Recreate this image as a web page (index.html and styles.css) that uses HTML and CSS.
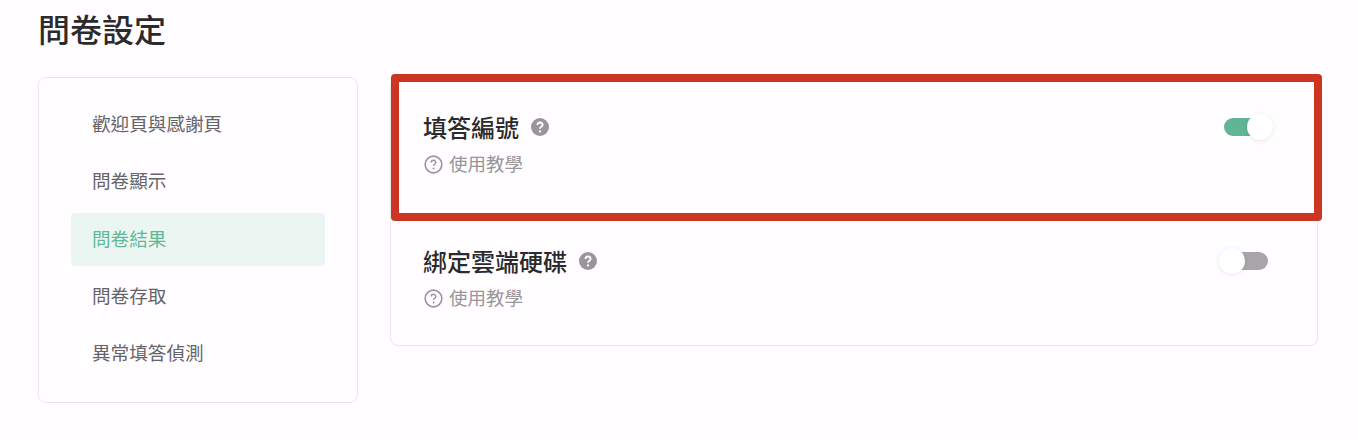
FILE: index.html
```html
<!DOCTYPE html>
<html lang="zh-Hant">
<head>
<meta charset="utf-8">
<title>問卷設定</title>
<link rel="stylesheet" href="styles.css">
</head>
<body>
<svg class="defs" width="0" height="0" aria-hidden="true">
  <symbol id="help-solid" viewBox="0 0 18 18">
    <circle cx="9" cy="9" r="9" fill="#98969a"/>
    <path d="M6.4 7.1a2.6 2.6 0 0 1 5.2 0c0 1.7-2.6 1.8-2.6 3.6" fill="none" stroke="#fff" stroke-width="1.8" stroke-linecap="butt"/>
    <circle cx="9" cy="13.4" r="1.1" fill="#fff"/>
  </symbol>
  <symbol id="help-line" viewBox="0 0 18 18">
    <circle cx="9" cy="9" r="7.9" fill="none" stroke="#98969a" stroke-width="1.5"/>
    <path d="M6.8 7.2a2.2 2.2 0 0 1 4.4 0c0 1.5-2.2 1.6-2.2 3.2" fill="none" stroke="#98969a" stroke-width="1.4"/>
    <circle cx="9" cy="12.8" r=".9" fill="#98969a"/>
  </symbol>
</svg>
<main class="page">
  <h1 class="title">問卷設定</h1>
  <div class="layout">
    <nav class="sidebar">
      <a class="nav-item">歡迎頁與感謝頁</a>
      <a class="nav-item">問卷顯示</a>
      <a class="nav-item active">問卷結果</a>
      <a class="nav-item">問卷存取</a>
      <a class="nav-item">異常填答偵測</a>
    </nav>
    <section class="panel">
      <div class="row">
        <div class="row-text">
          <div class="row-title"><span>填答編號</span><svg class="icon-solid"><use href="#help-solid"/></svg></div>
          <div class="row-link"><svg class="icon-line"><use href="#help-line"/></svg><span>使用教學</span></div>
        </div>
        <div class="toggle on"><span class="knob"></span></div>
      </div>
      <div class="row">
        <div class="row-text">
          <div class="row-title"><span>綁定雲端硬碟</span><svg class="icon-solid"><use href="#help-solid"/></svg></div>
          <div class="row-link"><svg class="icon-line"><use href="#help-line"/></svg><span>使用教學</span></div>
        </div>
        <div class="toggle"><span class="knob"></span></div>
      </div>
      <div class="highlight"></div>
    </section>
  </div>
</main>
</body>
</html>
```
FILE: styles.css
```css
* { box-sizing: border-box; }
html, body { margin: 0; height: 100%; }
body {
  background: #fffdff;
  color: #2b2a2c;
  font-family: "Noto Sans CJK TC", "Noto Sans", sans-serif;
  overflow: hidden;
}
.defs { position: absolute; }
.page { padding: 0 40px 0 38px; }
.title {
  margin: 0;
  height: 77px;
  padding-top: 5px;
  font-size: 32px;
  line-height: 46px;
  font-weight: 500;
  color: #2b2a2c;
}
.layout { display: flex; align-items: flex-start; gap: 32px; }
.sidebar {
  width: 320px;
  height: 326px;
  padding: 20px 32px;
  display: flex;
  flex-direction: column;
  gap: 4.25px;
  border: 1px solid #e8e6ea;
  border-radius: 8px;
}
.nav-item {
  height: 53px;
  padding-left: 21px;
  border-radius: 4px;
  font-size: 18.6px;
  line-height: 49px;
  color: #666468;
  font-weight: 400;
}
.nav-item.active { background: #ebf6f2; color: #5fb898; }
.panel {
  position: relative;
  width: 928px;
  height: 269px;
  border: 1px solid #e8e6ea;
  border-radius: 8px;
}
.row {
  height: 134px;
  padding: 0 49px 0 32px;
  display: flex;
  justify-content: space-between;
}
.row-title {
  display: flex;
  align-items: center;
  gap: 12px;
  height: 34px;
  margin-top: 32px;
  font-size: 24px;
  line-height: 34px;
  font-weight: 500;
}
.row-link {
  display: flex;
  align-items: center;
  gap: 6px;
  height: 26px;
  margin-top: 6px;
  font-size: 18.5px;
  line-height: 26px;
  color: #98969a;
}
.icon-solid { width: 18px; height: 18px; }
.icon-line { width: 19px; height: 19px; margin-top: 2px; margin-left: 1px; }
.toggle {
  position: relative;
  width: 44px;
  height: 18px;
  margin-top: 40px;
  border-radius: 9px;
  background: #a7a5a9;
}
.toggle.on { background: #5fb595; }
.knob {
  position: absolute;
  top: -4px;
  left: -5px;
  width: 26px;
  height: 26px;
  border-radius: 50%;
  background: #fff;
  box-shadow: 0 1px 4px rgba(60, 50, 70, .12);
}
.toggle.on .knob { left: 23px; }
.highlight {
  position: absolute;
  top: -4px;
  left: 0;
  width: 931px;
  height: 147px;
  border: 8px solid #cc3522;
  border-radius: 4px;
  pointer-events: none;
}
```
